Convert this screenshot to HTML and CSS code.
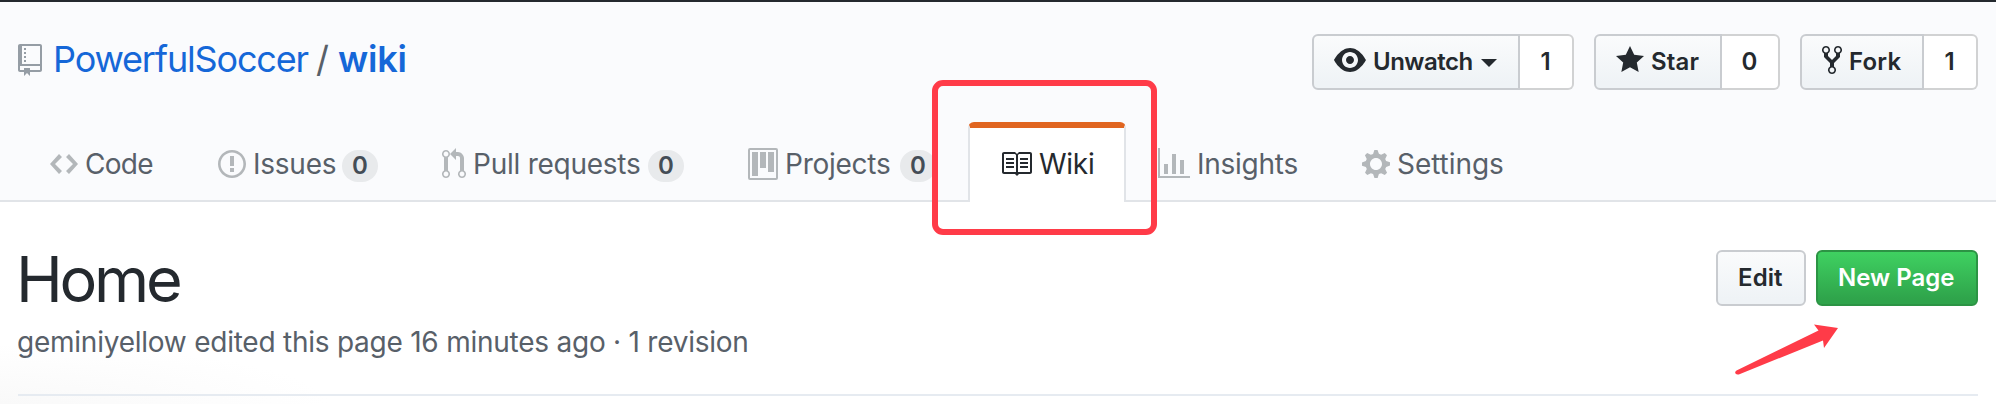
FILE: index.html
```html
<!DOCTYPE html>
<html lang="en">
<head>
<meta charset="utf-8">
<title>Home · PowerfulSoccer/wiki Wiki</title>
<link rel="stylesheet" href="styles.css">
</head>
<body>
<header class="repo-head">
  <div class="repo-bar">
    <h1 class="repo-title">
      <svg class="icon icon-repo" width="24" height="32" viewBox="0 0 12 16"><path fill-rule="evenodd" d="M4 9H3V8h1v1zm0-3H3v1h1V6zm0-2H3v1h1V4zm0-2H3v1h1V2zm8-1v12c0 .55-.45 1-1 1H6v2l-1.500-1.500L3 16v-2H1c-.55 0-1-.45-1-1V1c0-.55.45-1 1-1h10c.55 0 1 .45 1 1zm-1 10H1v2h2v-1h3v1h5v-2zm0-10H2v9h9V1z"/></svg>
      <a class="owner" href="#">PowerfulSoccer</a><span class="slash">/</span><a class="name" href="#">wiki</a>
    </h1>
    <div class="actions">
      <div class="btn-group">
        <button class="btn btn-left watch"><svg class="icon" width="32" height="32" viewBox="0 0 16 16"><path fill-rule="evenodd" d="M8.060 2C3 2 0 8 0 8s3 6 8.060 6C13 14 16 8 16 8s-3-6-7.940-6zM8 12c-2.200 0-4-1.780-4-4 0-2.200 1.800-4 4-4 2.220 0 4 1.800 4 4 0 2.220-1.780 4-4 4zm2-4c0 1.110-.89 2-2 2-1.110 0-2-.89-2-2 0-1.110.89-2 2-2 1.110 0 2 .89 2 2z"/></svg><span>Unwatch</span><i class="caret"></i></button><a class="count" href="#">1</a>
      </div>
      <div class="btn-group">
        <button class="btn btn-left star"><svg class="icon" width="28" height="32" viewBox="0 0 14 16"><path d="M14 6l-4.900-.64L7 1 4.900 5.360 0 6l3.600 3.260L2.670 14 7 11.670 11.330 14l-.93-4.740z"/></svg><span>Star</span></button><a class="count count-star" href="#">0</a>
      </div>
      <div class="btn-group">
        <button class="btn btn-left fork"><svg class="icon" width="20" height="32" viewBox="0 0 10 16"><path fill-rule="evenodd" d="M8 1a1.993 1.993 0 0 0-1 3.720V6L5 8 3 6V4.720A1.993 1.993 0 0 0 2 1a1.993 1.993 0 0 0-1 3.720V6.500l3 3v1.780A1.993 1.993 0 0 0 5 15a1.993 1.993 0 0 0 1-3.720V9.500l3-3V4.720A1.993 1.993 0 0 0 8 1zM2 4.200C1.340 4.200.8 3.650.8 3c0-.65.55-1.200 1.200-1.200.65 0 1.200.55 1.200 1.200 0 .65-.55 1.200-1.200 1.200zm3 10c-.66 0-1.200-.55-1.200-1.200 0-.65.55-1.200 1.200-1.200.65 0 1.200.55 1.200 1.200 0 .65-.55 1.200-1.200 1.200zm3-10c-.66 0-1.200-.55-1.200-1.200 0-.65.55-1.200 1.200-1.200.65 0 1.200.55 1.200 1.200 0 .65-.55 1.200-1.200 1.200z"/></svg><span>Fork</span></button><a class="count" href="#">1</a>
      </div>
    </div>
  </div>
  <nav class="tabs">
    <a class="tab tab-code" href="#"><svg class="icon" width="28" height="32" viewBox="0 0 14 16"><path fill-rule="evenodd" d="M9.500 3L8 4.500 11.500 8 8 11.500 9.500 13 14 8 9.500 3zm-5 0L0 8l4.500 5L6 11.500 2.500 8 6 4.500 4.500 3z"/></svg><span class="label">Code</span></a>
    <a class="tab tab-issues" href="#"><svg class="icon" width="28" height="32" viewBox="0 0 14 16"><path fill-rule="evenodd" d="M7 2.300c3.140 0 5.700 2.560 5.700 5.700s-2.560 5.700-5.700 5.700A5.710 5.710 0 0 1 1.300 8c0-3.140 2.560-5.700 5.700-5.700zM7 1C3.140 1 0 4.140 0 8s3.140 7 7 7 7-3.140 7-7-3.140-7-7-7zm1 3H6v5h2V4zm0 6H6v2h2v-2z"/></svg><span class="label">Issues</span><span class="counter">0</span></a>
    <a class="tab tab-pulls" href="#"><svg class="icon" width="24" height="32" viewBox="0 0 12 16"><path fill-rule="evenodd" d="M11 11.280V5c-.03-.78-.34-1.470-.94-2.060C9.460 2.350 8.780 2.030 8 2H7V0L4 3l3 3V4h1c.27.02.48.11.69.31.21.2.3.42.31.69v6.280A1.993 1.993 0 0 0 10 15a1.993 1.993 0 0 0 1-3.720zm-1 2.920c-.66 0-1.200-.55-1.200-1.200 0-.65.55-1.200 1.200-1.200.65 0 1.200.55 1.200 1.200 0 .65-.55 1.200-1.200 1.200zM4 3c0-1.110-.89-2-2-2a1.993 1.993 0 0 0-1 3.720v6.560A1.993 1.993 0 0 0 2 15a1.993 1.993 0 0 0 1-3.720V4.720c.59-.34 1-.98 1-1.720zm-.8 10c0 .66-.55 1.200-1.200 1.200-.65 0-1.200-.55-1.200-1.200 0-.65.55-1.200 1.200-1.200.65 0 1.200.55 1.200 1.200zM2 4.200C1.340 4.200.8 3.650.8 3c0-.65.55-1.200 1.200-1.200.65 0 1.200.55 1.200 1.200 0 .65-.55 1.200-1.200 1.200z"/></svg><span class="label">Pull requests</span><span class="counter">0</span></a>
    <a class="tab tab-projects" href="#"><svg class="icon" width="30" height="32" viewBox="0 0 15 16"><path fill-rule="evenodd" d="M10 12h3V2h-3v10zm-4-2h3V2H6v8zm-4 4h3V2H2v12zm-1 1h13V1H1v14zM14 0H1a1 1 0 0 0-1 1v14a1 1 0 0 0 1 1h13a1 1 0 0 0 1-1V1a1 1 0 0 0-1-1z"/></svg><span class="label">Projects</span><span class="counter">0</span></a>
    <a class="tab tab-wiki selected" href="#"><svg class="icon" width="32" height="32" viewBox="0 0 16 16"><path fill-rule="evenodd" d="M3 5h4v1H3V5zm0 3h4V7H3v1zm0 2h4V9H3v1zm11-5h-4v1h4V5zm0 2h-4v1h4V7zm0 2h-4v1h4V9zm2-6v9c0 .55-.45 1-1 1H9.500l-1 1-1-1H2c-.55 0-1-.45-1-1V3c0-.55.45-1 1-1h5.500l1 1 1-1H15c.55 0 1 .45 1 1zm-8 .5L7.500 3H2v9h6V3.500zm7-.5H9.500l-.5.5V12h6V3z"/></svg><span class="label">Wiki</span><span class="highlight"></span></a>
    <a class="tab tab-insights" href="#"><svg class="icon" width="32" height="32" viewBox="0 0 16 16"><path fill-rule="evenodd" d="M16 14v1H0V0h1v14h15zM5 13H3V8h2v5zm4 0H7V3h2v10zm4 0h-2V6h2v7z"/></svg><span class="label">Insights</span></a>
    <a class="tab tab-settings" href="#"><svg class="icon" width="28" height="32" viewBox="0 0 14 16"><path fill-rule="evenodd" d="M14 8.770v-1.600l-1.940-.64-.45-1.090.88-1.840-1.130-1.130-1.810.91-1.090-.45-.69-1.920h-1.600l-.63 1.940-1.110.45-1.840-.88-1.130 1.130.91 1.810-.45 1.090L0 7.230v1.590l1.940.64.45 1.090-.88 1.840 1.130 1.130 1.810-.91 1.090.45.69 1.920h1.590l.63-1.940 1.110-.45 1.840.88 1.130-1.130-.92-1.810.47-1.090L14 8.750v.02zM7 11c-1.660 0-3-1.340-3-3s1.340-3 3-3 3 1.340 3 3-1.340 3-3 3z"/></svg><span class="label">Settings</span></a>
  </nav>
</header>
<main class="wiki">
  <div class="wiki-head">
    <div>
      <h2 class="page-title">Home</h2>
      <p class="meta">geminiyellow edited this page 16 minutes ago · 1 revision</p>
    </div>
    <div class="page-actions">
      <button class="btn edit"><span>Edit</span></button>
      <button class="btn primary"><span>New Page</span></button>
      <svg class="arrow" width="106" height="54" viewBox="0 0 106 54"><path d="M104 4 80 .5 84.500 6.500 2.500 46.500Q.5 48 1.500 49.500 3 51.300 6 50L89 16.500 90 24Z"/></svg>
    </div>
  </div>
</main>
</body>
</html>
```

FILE: styles.css
```css
* { box-sizing: border-box; }

body {
  margin: 0;
  height: 404px;
  overflow: hidden;
  background: #fff;
  color: #24292e;
  font-family: Inter, "Liberation Sans", sans-serif;
  font-size: 28px;
}

a { color: inherit; text-decoration: none; }
.icon { display: block; flex: none; fill: currentColor; }

.repo-head {
  height: 202px;
  display: flex;
  flex-direction: column;
  justify-content: space-between;
  background: #fafbfd;
  border-top: 2px solid #24292e;
  border-bottom: 2px solid #e1e4e8;
}

.repo-bar {
  display: flex;
  justify-content: space-between;
  align-items: flex-start;
  padding: 32px 18px 0;
}

.repo-title {
  display: flex;
  margin: 1px 0 0;
  font-size: 36px;
  font-weight: 400;
  line-height: 48px;
  color: #586069;
}
.icon-repo { margin: 9px 11px 0 0; fill: #959da5; }
.owner { width: 263px; color: #1567d8; letter-spacing: -1.17px; }
.slash { width: 22px; }
.name { color: #1567d8; font-weight: 600; letter-spacing: -0.2px; }

.actions { display: flex; gap: 20px; }
.btn-group { display: flex; }

.btn {
  display: flex;
  align-items: flex-start;
  height: 56px;
  margin: 0;
  padding: 8px 0 0 20px;
  border: 2px solid #c9ccd0;
  border-radius: 6px;
  background: linear-gradient(#fafbfc, #eff3f6 90%);
  color: #24292e;
  font: 600 24px/36px Inter, "Liberation Sans", sans-serif;
  white-space: nowrap;
}
.btn-left { border-radius: 6px 0 0 6px; }
.watch { width: 208px; }
.star { width: 128px; }
.fork { width: 124px; }
.btn-left span { margin-left: 7px; letter-spacing: 0.2px; }
.btn.watch span { letter-spacing: -0.5px; }
.caret {
  margin: 15px 0 0 8px;
  border: 8px solid transparent;
  border-top-color: #24292e;
  border-bottom: 0;
}

.count {
  width: 54px;
  height: 56px;
  padding: 8px 1px 0 0;
  border: 2px solid #d1d2d3;
  border-left: 0;
  border-radius: 0 6px 6px 0;
  background: #fff;
  font-size: 24px;
  font-weight: 600;
  line-height: 36px;
  text-align: center;
}
.count-star { width: 58px; }

.tabs { display: flex; height: 78px; margin-left: 18px; color: #586069; }
.tab {
  display: flex;
  align-items: flex-start;
  height: 80px;
  padding: 26px 0 0 32px;
  line-height: 32px;
  white-space: nowrap;
}
.tab .icon { fill: #b3b7ba; }
.label { margin-left: 7px; letter-spacing: -0.25px; }
.counter {
  width: 36px;
  height: 32px;
  margin: 2px 0 0 auto;
  border-radius: 20px;
  background: #e8eaec;
  color: #444d56;
  font-size: 24px;
  font-weight: 600;
  line-height: 31px;
  text-align: center;
}
.tab-code { width: 168px; }
.tab-code .label { letter-spacing: -0.7px; }
.tab-issues { width: 192px; }
.tab-pulls { width: 306px; padding-left: 64px; }
.tab-projects { width: 252px; padding-left: 64px; }
.tab-insights { width: 204px; }
.tab-settings { width: 180px; }
.tab-settings .label { letter-spacing: -0.05px; }
.tab.selected {
  position: relative;
  width: 158px;
  margin-left: 32px;
  padding: 20px 0 0 30px;
  border: 2px solid #e1e4e8;
  border-top: 6px solid #e06520;
  border-bottom: 0;
  border-radius: 6px 6px 0 0;
  background: #fff;
  color: #24292e;
}
.tab.selected .icon { fill: #24292e; }

/* Callout frame drawn over the neighbouring tabs */
.highlight {
  position: absolute;
  left: -38px;
  top: -48px;
  width: 225px;
  height: 155px;
  border: 6px solid #ff3b48;
  border-radius: 11px;
}

.wiki {
  height: 202px;
  padding: 0 18px;
  background: radial-gradient(ellipse 330px 60px at 0 100%, #f9f9f9, #fff);
}
.wiki-head {
  display: flex;
  justify-content: space-between;
  height: 194px;
  padding-top: 38px;
  border-bottom: 2px solid #e6ebf1;
}
.page-title {
  margin: 0 0 0 -2px;
  font-size: 63px;
  font-weight: 400;
  line-height: 78px;
  letter-spacing: -3.3px;
}
.meta {
  margin: 4px 0 0 -1px;
  color: #586069;
  line-height: 40px;
  letter-spacing: -0.24px;
}

.page-actions { position: relative; display: flex; gap: 10px; padding-top: 10px; }
.edit { width: 90px; letter-spacing: 0.1px; }
.primary {
  width: 162px;
  border-color: #2c9444;
  background: linear-gradient(#3fd161, #2fa44b 90%);
  color: #fff;
}
.arrow { position: absolute; left: 18px; top: 84px; fill: #ff3b48; }
```
